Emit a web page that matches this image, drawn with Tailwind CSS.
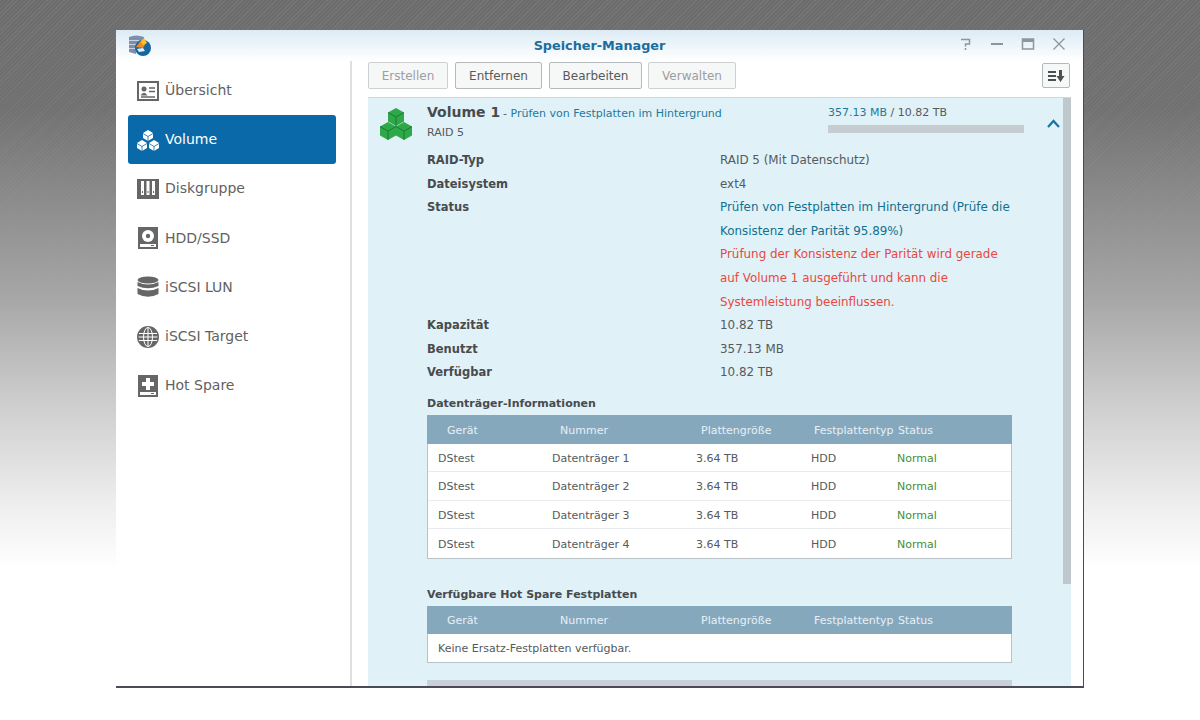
<!DOCTYPE html>
<html lang="de">
<head>
  <meta charset="UTF-8" />
  <title>Speicher-Manager</title>
  <script src="https://cdn.jsdelivr.net/npm/@tailwindcss/browser@4"></script>
</head>
<body class="h-[720px] w-[1200px] overflow-hidden font-['DejaVu_Sans',sans-serif] bg-[#707070] bg-[linear-gradient(180deg,rgba(112,112,112,0)_0%,rgba(120,120,120,0.4)_15%,#a8a8a8_42%,#cbcbcb_55%,#eeeeee_70%,#ffffff_79%),repeating-linear-gradient(135deg,rgba(255,255,255,0.04)_0px,rgba(255,255,255,0.04)_1px,rgba(0,0,0,0.04)_1px,rgba(0,0,0,0.04)_3px)]">
  <!-- Window -->
  <div class="ml-[116px] mt-[30px] w-[968px] h-[658px] bg-white flex flex-col border-b-2 border-r border-[#4a4a58] overflow-hidden">
    <!-- Title bar -->
    <div class="h-[31px] shrink-0 flex items-center relative bg-gradient-to-b from-[#dcebf5] to-white">
      <svg class="absolute left-[12px] top-[4px]" width="24" height="23" viewBox="0 0 24 23">
        <path d="M1 3 Q8 0 16 3 V8 H14 L8 16 V20 L1 18Z" fill="#7b90ad"/>
        <path d="M1 6.5 H11 M1 10.5 H9 M1 14.500 H7" stroke="#c8d2de" stroke-width="1.200"/>
        <circle cx="15" cy="14" r="8" fill="#14689f"/>
        <path d="M8 13 L14 5 L18 9 L15 14Z" fill="#ef8a22"/>
        <path d="M13 8 L16 4 L19 9 L15 11Z" fill="#f5c52c"/>
        <path d="M9 15 L15 14 L17 17 L11 18Z" fill="#e9eef2"/>
      </svg>
      <div class="flex-1 text-center text-[12.800px] font-bold text-[#1a6e9f]">Speicher-Manager</div>
      <div class="absolute right-[17px] top-[7px] flex items-center gap-[17px] text-[#8d969c]">
        <svg width="14" height="14" viewBox="0 0 14 14" fill="none" stroke="currentColor" stroke-width="1.500"><path d="M2 2.500 H10.500 V7 H6.500 V9.500"/><path d="M6.500 11 V13"/></svg>
        <svg width="14" height="14" viewBox="0 0 14 14" fill="none" stroke="currentColor" stroke-width="2"><path d="M1 7 H13"/></svg>
        <svg width="14" height="14" viewBox="0 0 14 14"><path d="M1.500 2 H12.500 V12 H1.500Z" fill="none" stroke="currentColor" stroke-width="1.500"/><path d="M1.500 2 H12.500 V5 H1.500Z" fill="currentColor"/></svg>
        <svg width="14" height="14" viewBox="0 0 14 14" fill="none" stroke="currentColor" stroke-width="1.300"><path d="M1.500 1.500 L12.500 12.500 M12.500 1.500 L1.500 12.500"/></svg>
      </div>
    </div>

    <div class="flex-1 flex min-h-0">
      <!-- Sidebar -->
      <nav class="w-[236px] shrink-0 border-r-2 border-[#dedfe0] pl-[12px] pr-[14px] pt-[5px] text-[14px] text-[#5f6263]">
        <a class="h-[49.200px] flex items-center gap-[6px] pl-[9px]">
          <svg class="w-[22px] h-[22px]" viewBox="0 0 22 22"><rect x="1" y="2" width="20" height="18" fill="none" stroke="#666" stroke-width="2"/><circle cx="7" cy="9" r="2.500" fill="#666"/><path d="M3.500 15.500 Q7 10 10.500 15.500Z" fill="#666"/><path d="M12 8 H18 M12 11.500 H18 M4 17 H18" stroke="#666" stroke-width="1.600"/></svg>
          Übersicht
        </a>
        <a class="h-[49.200px] flex items-center gap-[5px] pl-[8px] rounded-[3px] bg-[#0a69a9] text-white">
          <svg class="w-[24px] h-[22px]" viewBox="0 0 24 22" fill="#fff"><path d="M12 1 L17 4 V9 L12 12 L7 9 V4Z"/><path d="M6 11 L11 14 V19 L6 22 L1 19 V14Z"/><path d="M18 11 L23 14 V19 L18 22 L13 19 V14Z"/><path d="M7 4.500 L12 7.500 L17 4.500 M12 7.500 V12 M1 14.500 L6 17.500 L11 14.500 M6 17.500 V22 M13 14.500 L18 17.500 L23 14.500 M18 17.500 V22" fill="none" stroke="#0a69a9" stroke-width="0.800"/></svg>
          Volume
        </a>
        <a class="h-[49.200px] flex items-center gap-[6px] pl-[9px]">
          <svg class="w-[22px] h-[20px]" viewBox="0 0 22 20"><rect width="22" height="20" fill="#666"/><path d="M4 2 H7 V16 H4Z M9.500 2 H12.500 V16 H9.500Z M15 2 H18 V16 H15Z" fill="#fff"/><path d="M5 12 H6 V14 H5Z M10.500 12 H11.500 V14 H10.500Z M16 12 H17 V14 H16Z" fill="#666"/></svg>
          Diskgruppe
        </a>
        <a class="h-[49.200px] flex items-center gap-[7px] pl-[10px]">
          <svg class="w-[20px] h-[22px]" viewBox="0 0 20 22"><rect width="20" height="22" fill="#666"/><circle cx="10" cy="9" r="6" fill="#fff"/><circle cx="10" cy="9" r="2.200" fill="#666"/><path d="M2 17 H18 V20 H2Z" fill="#fff"/><path d="M13 18 H16 V19 H13Z" fill="#666"/></svg>
          HDD/SSD
        </a>
        <a class="h-[49.200px] flex items-center gap-[6px] pl-[9px]">
          <svg class="w-[22px] h-[22px]" viewBox="0 0 22 22" fill="#666"><ellipse cx="11" cy="4" rx="10.500" ry="3.500"/><path d="M0.500 6 Q11 11 21.500 6 V10 Q11 14.500 0.500 10Z"/><path d="M0.500 12 Q11 17 21.500 12 V18 Q11 23.500 0.500 18Z"/></svg>
          iSCSI LUN
        </a>
        <a class="h-[49.200px] flex items-center gap-[6px] pl-[9px]">
          <svg class="w-[22px] h-[22px]" viewBox="0 0 22 22"><circle cx="11" cy="11" r="11" fill="#666"/><g fill="none" stroke="#fff" stroke-width="1"><ellipse cx="11" cy="11" rx="4.500" ry="9.500"/><path d="M11 1.500 V20.500 M2 7.500 H20 M2 14.500 H20 M1.500 11 H20.500"/></g></svg>
          iSCSI Target
        </a>
        <a class="h-[49.200px] flex items-center gap-[7px] pl-[10px]">
          <svg class="w-[20px] h-[22px]" viewBox="0 0 20 22"><rect width="20" height="22" fill="#666"/><path d="M8 3 H12 V7 H16 V11 H12 V15 H8 V11 H4 V7 H8Z" fill="#fff"/><path d="M2 17 H18 V20 H2Z" fill="#fff"/><path d="M13 18 H16 V19 H13Z" fill="#666"/></svg>
          Hot Spare
        </a>
      </nav>

      <!-- Main -->
      <main class="flex-1 min-w-0 flex flex-col pl-[16px] pr-[12px]">
        <div class="h-[36px] shrink-0 flex items-start text-[12px] pt-[1px]">
          <button class="w-[80px] h-[27px] border border-[#ccd0d2] rounded-[2px] bg-[#f6f7f7] text-[#9a9fa2]">Erstellen</button>
          <button class="ml-[7px] w-[87px] h-[27px] border border-[#b4b9bc] rounded-[2px] bg-[#f6f7f7] text-[#555a5c]">Entfernen</button>
          <button class="ml-[7px] w-[93px] h-[27px] border border-[#b4b9bc] rounded-[2px] bg-[#f6f7f7] text-[#555a5c]">Bearbeiten</button>
          <button class="ml-[6px] w-[88px] h-[27px] border border-[#ccd0d2] rounded-[2px] bg-[#f6f7f7] text-[#9a9fa2]">Verwalten</button>
          <button class="ml-auto mr-[1px] mt-px w-[28px] h-[25px] border border-[#b4b9bc] rounded-[2px] bg-[#f6f7f7] flex items-center justify-center">
            <svg width="18" height="14" viewBox="0 0 18 14" fill="#4a4f52"><path d="M1 2 H9 V4 H1Z M1 6 H9 V8 H1Z M1 10 H9 V12 H1Z"/><path d="M12 1 H15 V7 H17.500 L13.500 13 L9.500 7 H12Z"/></svg>
          </button>
        </div>

        <!-- Volume panel -->
        <section class="flex-1 min-h-0 relative bg-[#e1f1f8] border-t border-[#c9d8e3] overflow-hidden pl-[59px] pt-[5px] text-[12px] text-[#555a5c]">
          <div class="absolute right-0 top-0 w-[8px] h-[486px] bg-[#bfc8cd]"></div>
          <svg class="absolute left-[11px] top-[9px]" width="34" height="33" viewBox="0 0 34 33">
            <g fill="#2fa84a"><path d="M17 1 L25 5.500 V14.500 L17 19 L9 14.500 V5.500Z"/><path d="M9 15 L17 19.500 V28.500 L9 33 L1 28.500 V19.500Z"/><path d="M25 15 L33 19.500 V28.500 L25 33 L17 28.500 V19.500Z"/></g>
            <path d="M9 5.500 L17 10 L25 5.500 M17 10 V19 M1 19.500 L9 24 L17 19.500 M9 24 V33 M17 19.500 L25 24 L33 19.500 M25 24 V33" fill="none" stroke="#14762e" stroke-width="0.900"/>
          </svg>
          <svg class="absolute left-[679px] top-[21px]" width="13" height="9" viewBox="0 0 13 9" fill="none" stroke="#16769f" stroke-width="2.200"><path d="M1 8 L6.500 2 L12 8"/></svg>

          <div class="flex h-[38px]">
            <div class="w-[401px]">
              <div class="leading-[18px]"><span class="text-[14px] font-bold text-[#474b4d]">Volume 1</span> <span class="text-[11px] text-[#1d7a9a] -ml-[1px]"><span class="text-[#555a5c]">-</span> Prüfen von Festplatten im Hintergrund</span></div>
              <div class="text-[11px] leading-[20px]">RAID 5</div>
            </div>
            <div class="w-[196px] text-[11px] leading-[16px] pt-[2px]">
              <div><span class="text-[#1d7a9a]">357.13 MB</span> / 10.82 TB</div>
              <div class="h-[8px] mt-[4px] bg-[#c5cdd1]"></div>
            </div>
          </div>

          <!-- Details -->
          <dl class="mt-[8px] grid grid-cols-[293px_300px] text-[11.900px] leading-[23.600px]">
            <dt class="font-bold text-[11.500px] text-[#474b4d]">RAID-Typ</dt><dd>RAID 5 (Mit Datenschutz)</dd>
            <dt class="font-bold text-[11.500px] text-[#474b4d]">Dateisystem</dt><dd>ext4</dd>
            <dt class="font-bold text-[11.500px] text-[#474b4d]">Status</dt>
            <dd>
              <div class="text-[#10708f]">Prüfen von Festplatten im Hintergrund (Prüfe die Konsistenz der Parität 95.89%)</div>
              <div class="text-[#e8483f]">Prüfung der Konsistenz der Parität wird gerade<br />auf Volume 1 ausgeführt und kann die<br />Systemleistung beeinflussen.</div>
            </dd>
            <dt class="font-bold text-[11.500px] text-[#474b4d]">Kapazität</dt><dd>10.82 TB</dd>
            <dt class="font-bold text-[11.500px] text-[#474b4d]">Benutzt</dt><dd>357.13 MB</dd>
            <dt class="font-bold text-[11.500px] text-[#474b4d]">Verfügbar</dt><dd>10.82 TB</dd>
          </dl>

          <h3 class="mt-[11px] text-[11px] font-bold text-[#474b4d] leading-[16px]">Datenträger-Informationen</h3>
          <div class="mt-[3px] w-[585px] bg-white border-x border-b border-[#b9c2c7] text-[11px]">
            <div class="h-[29px] pt-[3px] -mx-px bg-[#86a8bd] text-[#e6f0f6] grid grid-cols-[113px_141px_113px_84px_1fr] items-center pl-[20px]"><span>Gerät</span><span>Nummer</span><span>Plattengröße</span><span>Festplattentyp</span><span>Status</span></div>
            <div class="h-[28.500px] pt-[3px] grid grid-cols-[114px_144px_115px_86px_1fr] items-center pl-[10px] border-b border-[#e9ecee]"><span>DStest</span><span>Datenträger 1</span><span>3.64 TB</span><span>HDD</span><span class="text-[#3f8f3a]">Normal</span></div>
            <div class="h-[28.500px] pt-[3px] grid grid-cols-[114px_144px_115px_86px_1fr] items-center pl-[10px] border-b border-[#e9ecee]"><span>DStest</span><span>Datenträger 2</span><span>3.64 TB</span><span>HDD</span><span class="text-[#3f8f3a]">Normal</span></div>
            <div class="h-[28.500px] pt-[3px] grid grid-cols-[114px_144px_115px_86px_1fr] items-center pl-[10px] border-b border-[#e9ecee]"><span>DStest</span><span>Datenträger 3</span><span>3.64 TB</span><span>HDD</span><span class="text-[#3f8f3a]">Normal</span></div>
            <div class="h-[28.500px] pt-[3px] grid grid-cols-[114px_144px_115px_86px_1fr] items-center pl-[10px]"><span>DStest</span><span>Datenträger 4</span><span>3.64 TB</span><span>HDD</span><span class="text-[#3f8f3a]">Normal</span></div>
          </div>

          <h3 class="mt-[28px] text-[11px] font-bold text-[#474b4d] leading-[16px]">Verfügbare Hot Spare Festplatten</h3>
          <div class="mt-[3px] w-[585px] bg-white border-x border-b border-[#b9c2c7] text-[11px]">
            <div class="h-[28px] pt-[3px] -mx-px bg-[#86a8bd] text-[#e6f0f6] grid grid-cols-[113px_141px_113px_84px_1fr] items-center pl-[20px]"><span>Gerät</span><span>Nummer</span><span>Plattengröße</span><span>Festplattentyp</span><span>Status</span></div>
            <div class="h-[28px] pt-[2px] flex items-center pl-[10px]">Keine Ersatz-Festplatten verfügbar.</div>
          </div>
          <div class="mt-[17px] w-[585px] h-[12px] bg-[#c8d0d8]"></div>
        </section>
      </main>
    </div>
  </div>
</body>
</html>
